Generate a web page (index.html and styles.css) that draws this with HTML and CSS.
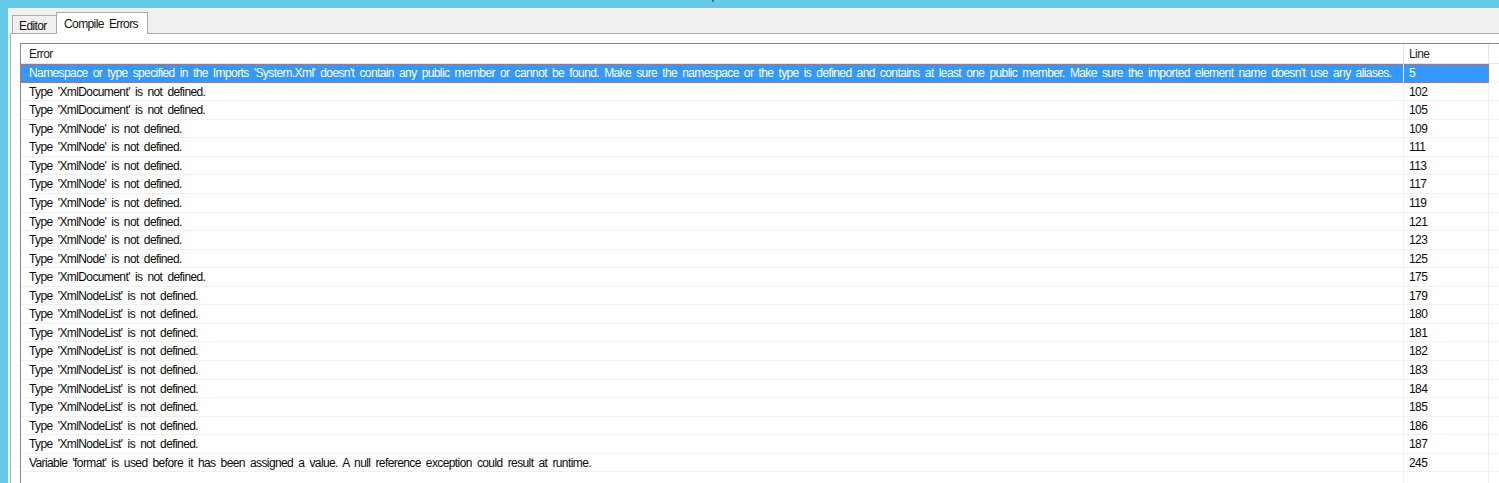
FILE: index.html
```html
<!DOCTYPE html>
<html>
<head>
<meta charset="utf-8">
<link rel="stylesheet" href="styles.css">
</head>
<body>
<div class="cursor-dot"></div>
<div class="window">
  <div class="tabstrip">
    <div class="tab">Editor</div>
    <div class="tab active">Compile Errors</div>
  </div>
  <div class="tabpage">
    <div class="listview">
      <div class="row header">
        <div class="c-err">Error</div>
        <div class="c-line">Line</div>
        <div class="c-fill"></div>
      </div>
      <div class="row selected">
        <div class="c-err">Namespace or type specified in the Imports 'System.Xml' doesn't contain any public member or cannot be found. Make sure the namespace or the type is defined and contains at least one public member. Make sure the imported element name doesn't use any aliases.</div>
        <div class="c-line">5</div>
        <div class="c-fill"></div>
      </div>
      <div class="row"><div class="c-err">Type 'XmlDocument' is not defined.</div><div class="c-line">102</div><div class="c-fill"></div></div>
      <div class="row"><div class="c-err">Type 'XmlDocument' is not defined.</div><div class="c-line">105</div><div class="c-fill"></div></div>
      <div class="row"><div class="c-err">Type 'XmlNode' is not defined.</div><div class="c-line">109</div><div class="c-fill"></div></div>
      <div class="row"><div class="c-err">Type 'XmlNode' is not defined.</div><div class="c-line">111</div><div class="c-fill"></div></div>
      <div class="row"><div class="c-err">Type 'XmlNode' is not defined.</div><div class="c-line">113</div><div class="c-fill"></div></div>
      <div class="row"><div class="c-err">Type 'XmlNode' is not defined.</div><div class="c-line">117</div><div class="c-fill"></div></div>
      <div class="row"><div class="c-err">Type 'XmlNode' is not defined.</div><div class="c-line">119</div><div class="c-fill"></div></div>
      <div class="row"><div class="c-err">Type 'XmlNode' is not defined.</div><div class="c-line">121</div><div class="c-fill"></div></div>
      <div class="row"><div class="c-err">Type 'XmlNode' is not defined.</div><div class="c-line">123</div><div class="c-fill"></div></div>
      <div class="row"><div class="c-err">Type 'XmlNode' is not defined.</div><div class="c-line">125</div><div class="c-fill"></div></div>
      <div class="row"><div class="c-err">Type 'XmlDocument' is not defined.</div><div class="c-line">175</div><div class="c-fill"></div></div>
      <div class="row"><div class="c-err">Type 'XmlNodeList' is not defined.</div><div class="c-line">179</div><div class="c-fill"></div></div>
      <div class="row"><div class="c-err">Type 'XmlNodeList' is not defined.</div><div class="c-line">180</div><div class="c-fill"></div></div>
      <div class="row"><div class="c-err">Type 'XmlNodeList' is not defined.</div><div class="c-line">181</div><div class="c-fill"></div></div>
      <div class="row"><div class="c-err">Type 'XmlNodeList' is not defined.</div><div class="c-line">182</div><div class="c-fill"></div></div>
      <div class="row"><div class="c-err">Type 'XmlNodeList' is not defined.</div><div class="c-line">183</div><div class="c-fill"></div></div>
      <div class="row"><div class="c-err">Type 'XmlNodeList' is not defined.</div><div class="c-line">184</div><div class="c-fill"></div></div>
      <div class="row"><div class="c-err">Type 'XmlNodeList' is not defined.</div><div class="c-line">185</div><div class="c-fill"></div></div>
      <div class="row"><div class="c-err">Type 'XmlNodeList' is not defined.</div><div class="c-line">186</div><div class="c-fill"></div></div>
      <div class="row"><div class="c-err">Type 'XmlNodeList' is not defined.</div><div class="c-line">187</div><div class="c-fill"></div></div>
      <div class="row"><div class="c-err">Variable 'format' is used before it has been assigned a value. A null reference exception could result at runtime.</div><div class="c-line">245</div><div class="c-fill"></div></div>
      <div class="row filler"><div class="c-err"></div><div class="c-line"></div><div class="c-fill"></div></div>
    </div>
  </div>
</div>
</body>
</html>
```

FILE: styles.css
```css
html, body {
  margin: 0;
  padding: 0;
  width: 1499px;
  height: 483px;
  overflow: hidden;
}
body {
  background: #65c8e8;
  font-family: "Liberation Sans", Arial, sans-serif;
  font-size: 12px;
  color: #000;
  position: relative;
  letter-spacing: -0.6px;
  word-spacing: 2.35px;
}
.cursor-dot {
  position: absolute;
  left: 712px;
  top: 0;
  width: 2px;
  height: 2px;
  background: #4a6d96;
}
.window {
  margin: 8px 0 0 8px;
  height: 475px;
  background: #f0f0f0;
  display: flex;
  flex-direction: column;
}
.tabstrip {
  height: 25px;
  display: flex;
  align-items: flex-end;
  padding-left: 4px;
  position: relative;
  z-index: 1;
}
.tab {
  box-sizing: border-box;
  height: 18px;
  border: 1px solid #adadad;
  border-bottom: none;
  background: #f0f0f0;
  padding: 3px 0 0 6px;
  width: 45px;
  color: #111;
}
.tab.active {
  height: 22px;
  width: 92px;
  background: #fff;
  border-color: #a9a9a9;
  margin-left: -1px;
  margin-bottom: -1px;
  padding: 4px 0 0 7px;
}
.tabpage {
  flex: 1;
  margin-left: 2px;
  border: 1px solid #acacac;
  border-right: none;
  border-bottom: none;
  background: #fff;
  padding: 9px 0 0 9px;
  display: flex;
  flex-direction: column;
}
.listview {
  flex: 1;
  border: 1px solid #828790;
  border-right: none;
  border-bottom: none;
  display: flex;
  flex-direction: column;
  background: #fff;
}
.row {
  display: flex;
  box-sizing: border-box;
  height: 18.57px;
  flex: none;
}
.row > div {
  box-sizing: border-box;
  border-bottom: 1px solid #f0f0f0;
  white-space: nowrap;
  overflow: hidden;
  padding-top: 1px;
  line-height: 17px;
  color: #0a0a0a;
}
.c-err {
  width: 1383px;
  padding-left: 8px;
  border-right: 1px solid #f0f0f0;
}
.c-line {
  width: 85px;
  padding-left: 5px;
  border-right: 1px solid #f0f0f0;
}
.c-fill {
  flex: 1;
}
.row.header {
  height: 20px;
}
.row.header > div {
  padding-top: 2px;
  line-height: 17px;
  border-bottom: 1px solid #e5e5e5;
  border-right-color: #e5e5e5;
  color: #1e1e1e;
}
.row.selected .c-err,
.row.selected .c-line {
  background: #3399ff;
  color: #fff;
  border-bottom: 1px dotted #e0653a;
  border-top: 1px dotted #e0653a;
  padding-top: 0;
  line-height: 17px;
}
.row.selected .c-err {
  border-right: 1px solid #fff;
}
.row.selected .c-line {
  border-right: 1px dotted #e0653a;
}
.row.filler {
  flex: 1;
}
.row.filler > div {
  border-bottom: none;
}
```
